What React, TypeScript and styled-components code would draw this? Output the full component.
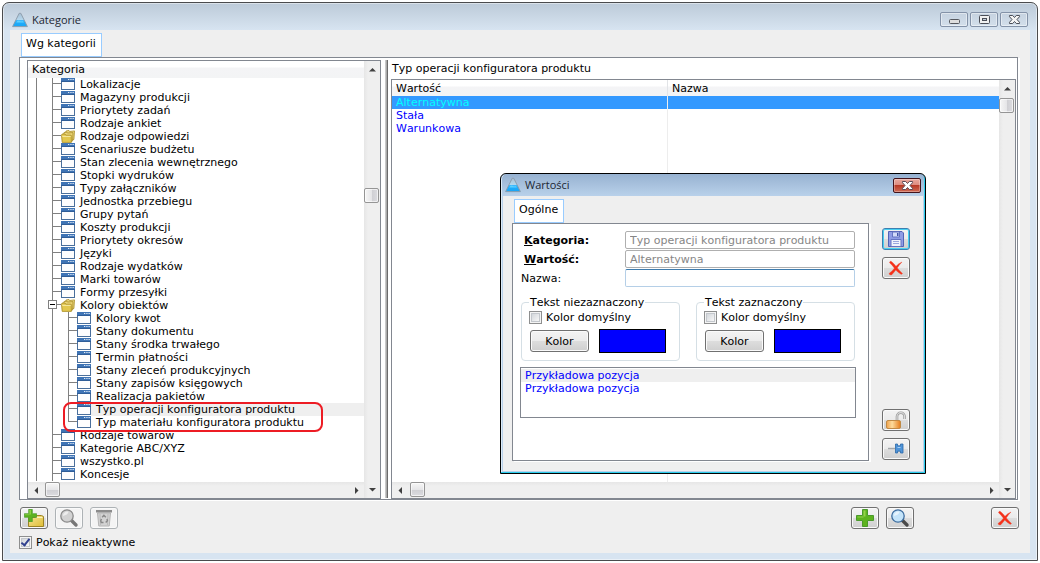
import React, { useState } from "react";
import styled, { createGlobalStyle, css } from "styled-components";

const GlobalStyle = createGlobalStyle`
  *, *::before, *::after { box-sizing: border-box; }
  body {
    margin: 0;
    background: #fff;
    color: #000;
    font: 11px/13px "DejaVu Sans", Verdana, sans-serif;
    font-kerning: none;
    font-variant-ligatures: none;
  }
  button, input { font: inherit; font-kerning: none; font-variant-ligatures: none; color: inherit; margin: 0; }
`;

const line = "#828790";

/* ---------- windows ---------- */

const Desktop = styled.div`
  display: flex;
  min-height: 100vh;
  padding: 2px;
`;

const MainWindow = styled.section`
  position: relative;
  flex: 1;
  min-width: 0;
  display: flex;
  flex-direction: column;
  border: 1px solid #4a4b4d;
  border-radius: 7px 7px 0 0;
  background: linear-gradient(#bccad8, #d7e4f1 27px);
  box-shadow: inset 0 0 0 1px rgba(255, 255, 255, 0.45);
  padding: 0 7px 7px;
`;

const TitleBar = styled.header<{ $small?: boolean }>`
  display: flex;
  align-items: center;
  height: ${(p) => (p.$small ? 22 : 27)}px;
  padding: ${(p) => (p.$small ? "0 2px" : "6px 2px 0")};
  gap: 4px;
`;

const Title = styled.h1`
  flex: 1;
  margin: 0;
  font: 11px/16px "Open Sans", "Segoe UI", sans-serif;
  color: #1c2733;
`;

const Captions = styled.div`
  display: flex;
  gap: 2px;
`;

const CaptionButton = styled.button<{ $danger?: boolean }>`
  display: grid;
  place-items: center;
  width: 28px;
  height: 15px;
  padding: 0;
  border-radius: 2px;
  border: 1px solid ${(p) => (p.$danger ? "#43141c" : "#8392a8")};
  background: ${(p) =>
    p.$danger
      ? "linear-gradient(#e9a99f, #dd8a7d 48%, #b83a26 50%, #cf6a55)"
      : "linear-gradient(#c5d2e0, #d3dfeb)"};
  box-shadow: inset 0 0 0 1px rgba(255, 255, 255, ${(p) => (p.$danger ? 0.3 : 0.45)});
`;

const Client = styled.div`
  flex: 1;
  display: flex;
  flex-direction: column;
  background: #efefef;
  padding: 3px 12px 4px 9px;
`;

const Tab = styled.button`
  align-self: flex-start;
  height: 24px;
  padding: 0 5px 3px 4px;
  margin-left: 2px;
  border: 1px solid #99ccff;
  background: #fff;
`;

const Panes = styled.main`
  flex: 1;
  display: grid;
  grid-template-columns: 354px 10px minmax(0, 1fr);
  border: 1px solid ${line};
  background: #fff;
  padding: 2px 1px 0 7px;
  box-shadow: 2px 1px 0 #fff;
`;

const Splitter = styled.div`
  background: linear-gradient(90deg, #c8c8c8 1px, #a9a9a9 1px 2px, #6b6b6b 2px);
  margin: 0 3px 1px 4px;
`;

/* ---------- lists and scroll bars ---------- */

const ListFrame = styled.div`
  flex: 1;
  min-height: 0;
  min-width: 0;
  display: grid;
  grid-template-columns: minmax(0, 1fr) 16px;
  grid-template-rows: minmax(0, 1fr) 16px;
  border: 1px solid ${line};
  background: #fff;
`;

const headerFill = css`
  background: linear-gradient(#fff 6px, #f4f4f6 7px, #f3f4f5);
`;

const Bar = styled.div<{ $vertical?: boolean }>`
  display: flex;
  flex-direction: ${(p) => (p.$vertical ? "column" : "row")};
  grid-row: ${(p) => (p.$vertical ? "1 / 3" : "2")};
  grid-column: ${(p) => (p.$vertical ? "2" : "1")};
  background: linear-gradient(${(p) => (p.$vertical ? "90deg" : "180deg")}, #e6e6e6, #efefef 4px, #efefef);
`;

const Track = styled.div<{ $vertical?: boolean; $offset: number }>`
  flex: 1;
  padding: ${(p) => (p.$vertical ? `${p.$offset}px 0 0` : `0 0 0 ${p.$offset}px`)};
`;

const Thumb = styled.div<{ $vertical?: boolean }>`
  width: 15px;
  height: 15px;
  border: 1px solid #959595;
  border-radius: 2px;
  background: linear-gradient(
    ${(p) => (p.$vertical ? "90deg" : "180deg")},
    #f6f6f6,
    #e6e6e8 50%,
    #cfcfd3 52%,
    #dcdce0
  );
  box-shadow: inset 0 0 0 1px rgba(255, 255, 255, 0.6);
`;

const ArrowButton = styled.button`
  display: grid;
  place-items: center;
  width: 16px;
  height: 17px;
  padding: 0;
  border: 0;
  background: none;
`;

type Direction = "up" | "down" | "left" | "right";
const arrows: Record<Direction, string> = {
  up: "M0 5.500 3.500 2 7 5.500z",
  down: "M0 2 7 2 3.500 5.500z",
  left: "M5 0 5 7 1.500 3.500z",
  right: "M2 0 2 7 5.500 3.500z",
};

const Arrow = ({ to }: { to: Direction }) => (
  <ArrowButton aria-label={`Scroll ${to}`}>
    <svg width="7" height="7" viewBox="0 0 7 7">
      <path d={arrows[to]} fill="#404040" />
    </svg>
  </ArrowButton>
);

const ScrollBar = ({ vertical, offset = 0 }: { vertical?: boolean; offset?: number }) => (
  <Bar $vertical={vertical}>
    <Arrow to={vertical ? "up" : "left"} />
    <Track $vertical={vertical} $offset={offset}>
      <Thumb $vertical={vertical} />
    </Track>
    <Arrow to={vertical ? "down" : "right"} />
  </Bar>
);

/* ---------- tree ---------- */

const TreeArea = styled.div`
  overflow: hidden;
`;

const TreeHeader = styled.div`
  ${headerFill}
  height: 17px;
  padding: 2px 4px 0;
`;

const TreeList = styled.ul`
  list-style: none;
  margin: 0;
  padding: 0;
`;

const TreeRow = styled.div`
  display: flex;
  height: 13px;
`;

const Guide = styled.span<{ $first?: boolean; $end?: boolean }>`
  position: relative;
  flex: none;
  width: ${(p) => (p.$first ? 9 : 16)}px;
  height: ${(p) => (p.$end ? 6 : 13)}px;
  border-right: 1px solid #808080;
`;

const Dash = styled.span`
  flex: none;
  width: 8px;
  height: 6px;
  border-bottom: 1px solid #808080;
`;

const Expander = styled.button`
  position: absolute;
  top: 1px;
  right: -5px;
  display: grid;
  place-items: center;
  width: 9px;
  height: 9px;
  padding: 0;
  border: 1px solid #808080;
  background: #fff;
`;

const TreeLabel = styled.span<{ $current?: boolean }>`
  flex: 1;
  padding-left: 5px;
  white-space: nowrap;
  background: ${(p) => (p.$current ? "#efefef" : "none")};
`;

const Marked = styled.li`
  position: relative;
`;

const Marker = styled.span`
  position: absolute;
  top: -1px;
  left: 35px;
  width: 260px;
  height: 30px;
  border: 2px solid #ed1c24;
  border-radius: 8px;
  pointer-events: none;
`;

/* ---------- right pane ---------- */

const RightPane = styled.div`
  display: flex;
  flex-direction: column;
  min-width: 0;
`;

const PaneCaption = styled.div`
  height: 19px;
  padding: 2px 1px;
`;

const TableArea = styled.div`
  overflow: hidden;
  background: linear-gradient(90deg, transparent 275px, #ededed 275px 276px, transparent 276px);
`;

const ValueTable = styled.table`
  width: 100%;
  table-layout: fixed;
  border-collapse: separate;
  border-spacing: 0;
`;

const HeadCell = styled.th`
  ${headerFill}
  height: 16px;
  padding: 1px 4px 0;
  text-align: left;
  font-weight: normal;
  &:first-child { width: 276px; border-right: 1px solid #e2e4e7; }
`;

const ValueRow = styled.tr<{ $selected?: boolean }>`
  color: ${(p) => (p.$selected ? "#00ffff" : "#0000ff")};
  background: ${(p) => (p.$selected ? "#3399ff" : "none")};
`;

const ValueCell = styled.td`
  height: 13px;
  padding: 0 4px;
  &:first-child { border-right: 1px solid #ededed; }
`;

/* ---------- controls ---------- */

const ToolBar = styled.div`
  display: flex;
  gap: 7px;
  margin: 7px -1px 7px 1px;
`;

const Spring = styled.span`
  flex: 1;
`;

const WideGap = styled.span`
  width: 63px;
`;

const ToolButton = styled.button<{ $active?: boolean }>`
  display: grid;
  place-items: center;
  width: 28px;
  height: 22px;
  padding: 0;
  border: 1px solid ${(p) => (p.$active ? "#3c7fb1" : "#707070")};
  border-radius: 3px;
  background: linear-gradient(#f3f3f3, #ebebeb 50%, #dddddd 51%, #cfcfcf);
  box-shadow: inset 0 0 0 1px ${(p) => (p.$active ? "#48d0f2" : "#fafafa")};
  &:disabled {
    border-color: #adb2b5;
    background: #f4f4f4;
  }
`;

const CheckLabel = styled.label`
  display: flex;
  align-items: center;
  gap: 4px;
  height: 13px;
`;

const CheckBox = styled.input`
  appearance: none;
  display: grid;
  place-items: center;
  flex: none;
  width: 13px;
  height: 13px;
  border: 1px solid #8e8f8f;
  background: linear-gradient(135deg, #c9ced4, #f6f6f6 80%);
  box-shadow: inset 0 0 0 1px #f4f4f4, inset 0 0 0 2px #c3c7cc;
  &:checked::before {
    content: "";
    width: 5px;
    height: 9px;
    margin-bottom: 3px;
    border: solid #31418f;
    border-width: 0 2px 2px 0;
    transform: rotate(38deg);
  }
`;

/* ---------- dialog ---------- */

const Dialog = styled.section`
  position: absolute;
  left: 497px;
  top: 170px;
  width: 426px;
  border: 1px solid #000;
  border-radius: 6px 6px 0 0;
  background: linear-gradient(#97b2d1, #b9d1ea 22px);
  box-shadow: inset -1px -1px 0 #2bcdec, inset 1px 0 0 #dcebf7;
  padding: 0 2px 2px;
`;

const DialogBody = styled.div`
  display: grid;
  grid-template-columns: minmax(0, 1fr) 28px;
  column-gap: 13px;
  padding: 3px 13px 10px 9px;
  background: #efefef;
`;

const TabGroup = styled.div`
  display: flex;
  flex-direction: column;
`;

const Form = styled.form`
  height: 238px;
  padding: 7px 12px 0 7px;
  border: 1px solid ${line};
  background: #fff;
  box-shadow: 2px 1px 0 #fff;
`;

const Fields = styled.div`
  display: grid;
  grid-template-columns: 105px minmax(0, 1fr);
  grid-auto-rows: 18px;
  row-gap: 1px;
  align-items: center;
  padding-right: 1px;
`;

const FieldLabel = styled.label<{ $strong?: boolean }>`
  padding-left: ${(p) => (p.$strong ? 4 : 1)}px;
  font-weight: ${(p) => (p.$strong ? "bold" : "normal")};
`;

const Field = styled.input`
  width: 100%;
  height: 18px;
  padding: 0 4px;
  border: 1px solid #b5cfe7;
  border-top-color: #3d7bad;
  border-radius: 2px;
  background: #fff;
  &:disabled {
    border-color: #afafaf;
    color: #868686;
  }
`;

const Groups = styled.div`
  display: grid;
  grid-template-columns: 1fr 1fr;
  column-gap: 16px;
  margin: 9px 1px 0;
`;

const Group = styled.fieldset`
  min-width: 0;
  margin: 0;
  padding: 2px 7px 7px;
  border: 1px solid #d5dfe5;
  border-radius: 4px;
`;

const Legend = styled.legend`
  padding: 0 1px;
`;

const ColorRow = styled.div`
  display: flex;
  align-items: center;
  gap: 10px;
  margin: 5px 0 0 1px;
`;

const PushButton = styled.button`
  width: 59px;
  height: 22px;
  padding: 0;
  border: 1px solid #707070;
  border-radius: 3px;
  background: linear-gradient(#f3f3f3, #ebebeb 50%, #dddddd 51%, #cfcfcf);
  box-shadow: inset 0 0 0 1px #fafafa;
`;

const Swatch = styled.span`
  width: 67px;
  height: 24px;
  border: 1px solid #000;
  background: #0000ff;
`;

const Samples = styled.ul`
  list-style: none;
  height: 51px;
  margin: 6px 0 0;
  padding: 1px 0 0;
  border: 1px solid ${line};
  color: #0000ff;
`;

const Sample = styled.li<{ $current?: boolean }>`
  padding-left: 4px;
  background: ${(p) => (p.$current ? "#efefef" : "none")};
`;

const SideButtons = styled.div`
  display: flex;
  flex-direction: column;
  gap: 7px;
  padding: 29px 0 1px;
`;

/* ---------- drawings ---------- */

const LogoIcon = () => (
  <svg width="16" height="16" viewBox="0 0 16 16">
    <defs>
      <linearGradient id="logo" x1="0" y1="0" x2="0" y2="1">
        <stop offset="0" stopColor="#a8c0d4" />
        <stop offset=".5" stopColor="#b5d8ee" />
        <stop offset=".55" stopColor="#22b0ff" />
        <stop offset="1" stopColor="#19a4f4" />
      </linearGradient>
    </defs>
    <path d="M7.200 1.300h1.600L15.400 14.600H.6z" fill="url(#logo)" stroke="#8b9aa8" strokeWidth=".9" strokeLinejoin="round" />
    <path d="M5 9.200q1.500-1.200 3-.3t3 0l1 1.600H4.200z" fill="#5cd0ff" />
  </svg>
);

const FormIcon = () => (
  <svg width="14" height="12" viewBox="0 0 14 12">
    <rect x=".5" y=".5" width="13" height="11" fill="#fdfdfe" stroke="#4a6f9c" />
    <rect width="14" height="4" fill="#3f74b5" />
    <rect y="3" width="14" height="1" fill="#2f5d98" />
    <path d="M7 1.500h1.300M9.300 1.500h1.300M11.500 1.500h1.300" stroke="#dfe9f5" />
  </svg>
);

const FoldersIcon = () => (
  <svg width="14" height="13" viewBox="0 0 14 13">
    <path d="M4.500 3.500 5 1l3-.5.6 1 4.900-.6-.6 8.600-3 .5z" fill="#efdc85" stroke="#a88c25" strokeWidth=".8" />
    <path d="M2.500 4.500 3 2.500l2.800-.4.6.9 5.600-.4-.4 8.400-2 .5z" fill="#ecd679" stroke="#a88c25" strokeWidth=".8" />
    <path d="M.5 5.500 1 4h3l.8 1.200h5.400l.2 7.200H1.200z" fill="#e3c84f" stroke="#a88c25" strokeWidth=".8" />
    <path d="M1.300 6.400h8.400" stroke="#f7eba6" />
  </svg>
);

const PlusShape = ({ size = 18 }: { size?: number }) => (
  <svg width={size} height={size} viewBox="0 0 18 18">
    <path d="M6.500.5h5v6h6v5h-6v6h-5v-6h-6v-5h6z" fill="#5db31f" stroke="#4a9a2c" />
    <path d="M7.500 1.500h2v6h-8h6z" fill="#a9e05c" opacity=".7" />
    <path d="M1.500 7.500h6v1h-6z" fill="#a9e05c" opacity=".7" />
  </svg>
);

const NewFolderIcon = () => (
  <svg width="20" height="18" viewBox="0 0 20 18">
    <defs>
      <linearGradient id="folder" x1="0" y1="0" x2="1" y2="1">
        <stop offset="0" stopColor="#f6e695" />
        <stop offset="1" stopColor="#dfbd35" />
      </linearGradient>
    </defs>
    <path d="M4.500 17.500v-9h7l1-2h5l2 1v10z" fill="url(#folder)" stroke="#9c8324" />
    <path d="M12.500 8.500h6" stroke="#fbf2bd" />
    <PlusShape size={13} />
  </svg>
);

const LensIcon = ({ gray }: { gray?: boolean }) => (
  <svg width="20" height="20" viewBox="0 0 20 20">
    <path d="m12 12 5 5" stroke={gray ? "#777" : "#4a4a4a"} strokeWidth="3.400" strokeLinecap="round" />
    <circle cx="8" cy="8" r="6.200" fill={gray ? "#d2d2d2" : "#c4e4fa"} stroke={gray ? "#8a8a8a" : "#3d6c9e"} strokeWidth="1.300" />
    <path d="M3.800 8A4.500 4.500 0 0 1 9.500 3.800Q9 7 3.800 8" fill="#fff" opacity=".6" />
  </svg>
);

const BinIcon = () => (
  <svg width="18" height="18" viewBox="0 0 18 18">
    <path d="M2.500 4h13l-1.300 13H3.800z" fill="#d3d3d3" stroke="#b4b4b4" />
    <path d="M1 1h16v2.500H1z" fill="#8c8c8c" />
    <path d="M5 5l.6 11M13 5l-.6 11" stroke="#bcbcbc" />
    <path d="m7.200 8.300 1.700-2 1.900 2M12 10l.4 1.800-1.700 1.700M8.500 13.500H6.300l-.6-1.800.8-1.700" fill="none" stroke="#888" strokeWidth="1.400" />
  </svg>
);

const CrossIcon = () => (
  <svg width="16" height="16" viewBox="0 0 16 16">
    <path d="M1.500 2.700C2 1 3 1 4 2q2.500 2.200 4 4.300Q10.500 3.500 14 2 11.500 4.500 9.300 7.900q2.500 3 5.200 5.600-.5 1-1.400.8Q9.500 12.300 7.800 10 5.500 13 3.500 15 1.500 15.300 1 13.500 4 11.500 6.400 8.200 4.500 5.200 1.500 2.700z" fill="#f5301a" stroke="#ee4a30" strokeWidth=".4" />
  </svg>
);

const DiskIcon = () => (
  <svg width="16" height="16" viewBox="0 0 16 16">
    <path d="M.5.5h13.500l1.500 1.500v13.500H.5z" fill="#8f9ce6" stroke="#5463b6" />
    <path d="M4.500 1h7v5h-7z" fill="#d3dbf9" stroke="#6674c2" />
    <path d="M9 2h1.500v3H9z" fill="#4253a8" />
    <path d="M3 8.500h10v7H3z" fill="#f1f3fc" stroke="#6674c2" />
    <path d="M5 10.500h6M5 12.500h6" stroke="#9aa6dd" />
  </svg>
);

const PadlockIcon = () => (
  <svg width="20" height="18" viewBox="0 0 20 18">
    <defs>
      <linearGradient id="brass">
        <stop offset="0" stopColor="#f0a04a" />
        <stop offset=".4" stopColor="#fddc9c" />
        <stop offset="1" stopColor="#e57d1c" />
      </linearGradient>
    </defs>
    <path d="M11 9V5.500a3.800 3.800 0 0 1 7.600 0V8" fill="none" stroke="#9a9a9a" strokeWidth="2.600" />
    <path d="M11 9V5.500a3.800 3.800 0 0 1 7.600 0V8" fill="none" stroke="#dadada" strokeWidth="1.200" />
    <rect x=".5" y="9.500" width="14" height="8" rx="1.500" fill="url(#brass)" stroke="#c08a45" />
  </svg>
);

const PinIcon = () => (
  <svg width="16" height="12" viewBox="0 0 16 12">
    <path d="M0 5.500h7" stroke="#a2a6aa" strokeWidth="1.400" />
    <path d="M7.500 1h2v1.800h3V1H15v9h-2.500V8.200h-3V10h-2z" fill="#4f94d8" stroke="#2b68a8" strokeWidth=".8" />
    <path d="M9.500 4.500h3" stroke="#a9d0f5" />
  </svg>
);

const CloseGlyph = ({ color, edge }: { color: string; edge: string }) => (
  <svg width="13" height="11" viewBox="0 0 13 11">
    <path d="M1.500 1.500h3.200l1.800 2 1.800-2h3.200v1.200L9 5.500l2.500 2.800v1.200H8.300l-1.800-2-1.800 2H1.500V8.300L4 5.500 1.500 2.700z" fill={color} stroke={edge} />
  </svg>
);

const MinimizeGlyph = () => (
  <svg width="13" height="11" viewBox="0 0 13 11">
    <rect x="1.500" y="5.500" width="10" height="4" rx="1" fill="#dedede" stroke="#55585f" />
  </svg>
);

const MaximizeGlyph = () => (
  <svg width="13" height="11" viewBox="0 0 13 11">
    <rect x="1.500" y="1.500" width="10" height="8" rx="1" fill="#f0f0f0" stroke="#4b4e57" />
    <rect x="4.500" y="4.500" width="4" height="2" fill="#c0cbd8" stroke="#4b4e57" />
  </svg>
);

/* ---------- data ---------- */

interface Node {
  label: string;
  folder?: boolean;
  children?: string[];
}

const marked = ["Typ operacji konfiguratora produktu", "Typ materiału konfiguratora produktu"];

const nodes: Node[] = [
  { label: "Lokalizacje" },
  { label: "Magazyny produkcji" },
  { label: "Priorytety zadań" },
  { label: "Rodzaje ankiet" },
  { label: "Rodzaje odpowiedzi", folder: true },
  { label: "Scenariusze budżetu" },
  { label: "Stan zlecenia wewnętrznego" },
  { label: "Stopki wydruków" },
  { label: "Typy załączników" },
  { label: "Jednostka przebiegu" },
  { label: "Grupy pytań" },
  { label: "Koszty produkcji" },
  { label: "Priorytety okresów" },
  { label: "Języki" },
  { label: "Rodzaje wydatków" },
  { label: "Marki towarów" },
  { label: "Formy przesyłki" },
  {
    label: "Kolory obiektów",
    folder: true,
    children: [
      "Kolory kwot",
      "Stany dokumentu",
      "Stany środka trwałego",
      "Termin płatności",
      "Stany zleceń produkcyjnych",
      "Stany zapisów księgowych",
      "Realizacja pakietów",
    ],
  },
  { label: "Rodzaje towarów" },
  { label: "Kategorie ABC/XYZ" },
  { label: "wszystko.pl" },
  { label: "Koncesje" },
];

const values = ["Alternatywna", "Stała", "Warunkowa"];

const ChildRow = ({ label, current, end }: { label: string; current?: boolean; end?: boolean }) => (
  <TreeRow>
    <Guide $first />
    <Guide />
    <Guide $end={end} />
    <Dash />
    <FormIcon />
    <TreeLabel $current={current}>{label}</TreeLabel>
  </TreeRow>
);

const TreeNode = ({ node }: { node: Node }) => (
  <li>
    <TreeRow>
      <Guide $first />
      <Guide>
        {node.children && (
          <Expander aria-label="Zwiń">
            <svg width="5" height="1" viewBox="0 0 5 1">
              <rect width="5" height="1" fill="#000" />
            </svg>
          </Expander>
        )}
      </Guide>
      <Dash />
      {node.folder ? <FoldersIcon /> : <FormIcon />}
      <TreeLabel>{node.label}</TreeLabel>
    </TreeRow>
    {node.children && (
      <TreeList>
        {node.children.map((c) => (
          <li key={c}>
            <ChildRow label={c} />
          </li>
        ))}
        <Marked>
          {marked.map((c, i) => (
            <ChildRow key={c} label={c} current={i === 0} end={i === marked.length - 1} />
          ))}
          <Marker />
        </Marked>
      </TreeList>
    )}
  </li>
);

const ColorGroup = ({ title }: { title: string }) => (
  <Group>
    <Legend>{title}</Legend>
    <CheckLabel>
      <CheckBox type="checkbox" />
      Kolor domyślny
    </CheckLabel>
    <ColorRow>
      <PushButton type="button">Kolor</PushButton>
      <Swatch />
    </ColorRow>
  </Group>
);

const ValueDialog = () => (
  <Dialog role="dialog" aria-label="Wartości">
    <TitleBar $small>
      <LogoIcon />
      <Title as="h2">Wartości</Title>
      <CaptionButton $danger aria-label="Zamknij">
        <CloseGlyph color="#fff" edge="#5b4a55" />
      </CaptionButton>
    </TitleBar>
    <DialogBody>
      <TabGroup>
        <Tab>Ogólne</Tab>
        <Form>
          <Fields>
            <FieldLabel $strong htmlFor="category"><u>K</u>ategoria:</FieldLabel>
            <Field id="category" disabled defaultValue="Typ operacji konfiguratora produktu" />
            <FieldLabel $strong htmlFor="value"><u>W</u>artość:</FieldLabel>
            <Field id="value" disabled defaultValue="Alternatywna" />
            <FieldLabel htmlFor="name">Nazwa:</FieldLabel>
            <Field id="name" />
          </Fields>
          <Groups>
            <ColorGroup title="Tekst niezaznaczony" />
            <ColorGroup title="Tekst zaznaczony" />
          </Groups>
          <Samples>
            <Sample $current>Przykładowa pozycja</Sample>
            <Sample>Przykładowa pozycja</Sample>
          </Samples>
        </Form>
      </TabGroup>
      <SideButtons>
        <ToolButton $active aria-label="Zapisz"><DiskIcon /></ToolButton>
        <ToolButton aria-label="Anuluj"><CrossIcon /></ToolButton>
        <Spring />
        <ToolButton aria-label="Odblokuj"><PadlockIcon /></ToolButton>
        <ToolButton aria-label="Przypnij"><PinIcon /></ToolButton>
      </SideButtons>
    </DialogBody>
  </Dialog>
);

export default function App() {
  const [showInactive, setShowInactive] = useState(true);
  return (
    <Desktop>
      <GlobalStyle />
      <MainWindow>
        <TitleBar>
          <LogoIcon />
          <Title>Kategorie</Title>
          <Captions>
            <CaptionButton aria-label="Minimalizuj"><MinimizeGlyph /></CaptionButton>
            <CaptionButton aria-label="Maksymalizuj"><MaximizeGlyph /></CaptionButton>
            <CaptionButton aria-label="Zamknij"><CloseGlyph color="#f4f4f4" edge="#4b4e57" /></CaptionButton>
          </Captions>
        </TitleBar>
        <Client>
          <Tab>Wg kategorii</Tab>
          <Panes>
            <ListFrame>
              <TreeArea>
                <TreeHeader>Kategoria</TreeHeader>
                <TreeList>
                  {nodes.map((n) => (
                    <TreeNode key={n.label} node={n} />
                  ))}
                </TreeList>
              </TreeArea>
              <ScrollBar vertical offset={110} />
              <ScrollBar offset={1} />
            </ListFrame>
            <Splitter />
            <RightPane>
              <PaneCaption>Typ operacji konfiguratora produktu</PaneCaption>
              <ListFrame>
                <TableArea>
                  <ValueTable>
                    <thead>
                      <tr>
                        <HeadCell>Wartość</HeadCell>
                        <HeadCell>Nazwa</HeadCell>
                      </tr>
                    </thead>
                    <tbody>
                      {values.map((v, i) => (
                        <ValueRow key={v} $selected={i === 0}>
                          <ValueCell>{v}</ValueCell>
                          <ValueCell />
                        </ValueRow>
                      ))}
                    </tbody>
                  </ValueTable>
                </TableArea>
                <ScrollBar vertical offset={1} />
                <ScrollBar offset={2} />
              </ListFrame>
            </RightPane>
          </Panes>
          <ToolBar>
            <ToolButton aria-label="Dodaj kategorię"><NewFolderIcon /></ToolButton>
            <ToolButton disabled aria-label="Podgląd kategorii"><LensIcon gray /></ToolButton>
            <ToolButton disabled aria-label="Usuń kategorię"><BinIcon /></ToolButton>
            <Spring />
            <ToolButton aria-label="Dodaj wartość"><PlusShape /></ToolButton>
            <ToolButton aria-label="Podgląd wartości"><LensIcon /></ToolButton>
            <WideGap />
            <ToolButton aria-label="Usuń wartość"><CrossIcon /></ToolButton>
          </ToolBar>
          <CheckLabel>
            <CheckBox
              type="checkbox"
              checked={showInactive}
              onChange={(e) => setShowInactive(e.target.checked)}
            />
            Pokaż nieaktywne
          </CheckLabel>
        </Client>
        <ValueDialog />
      </MainWindow>
    </Desktop>
  );
}
